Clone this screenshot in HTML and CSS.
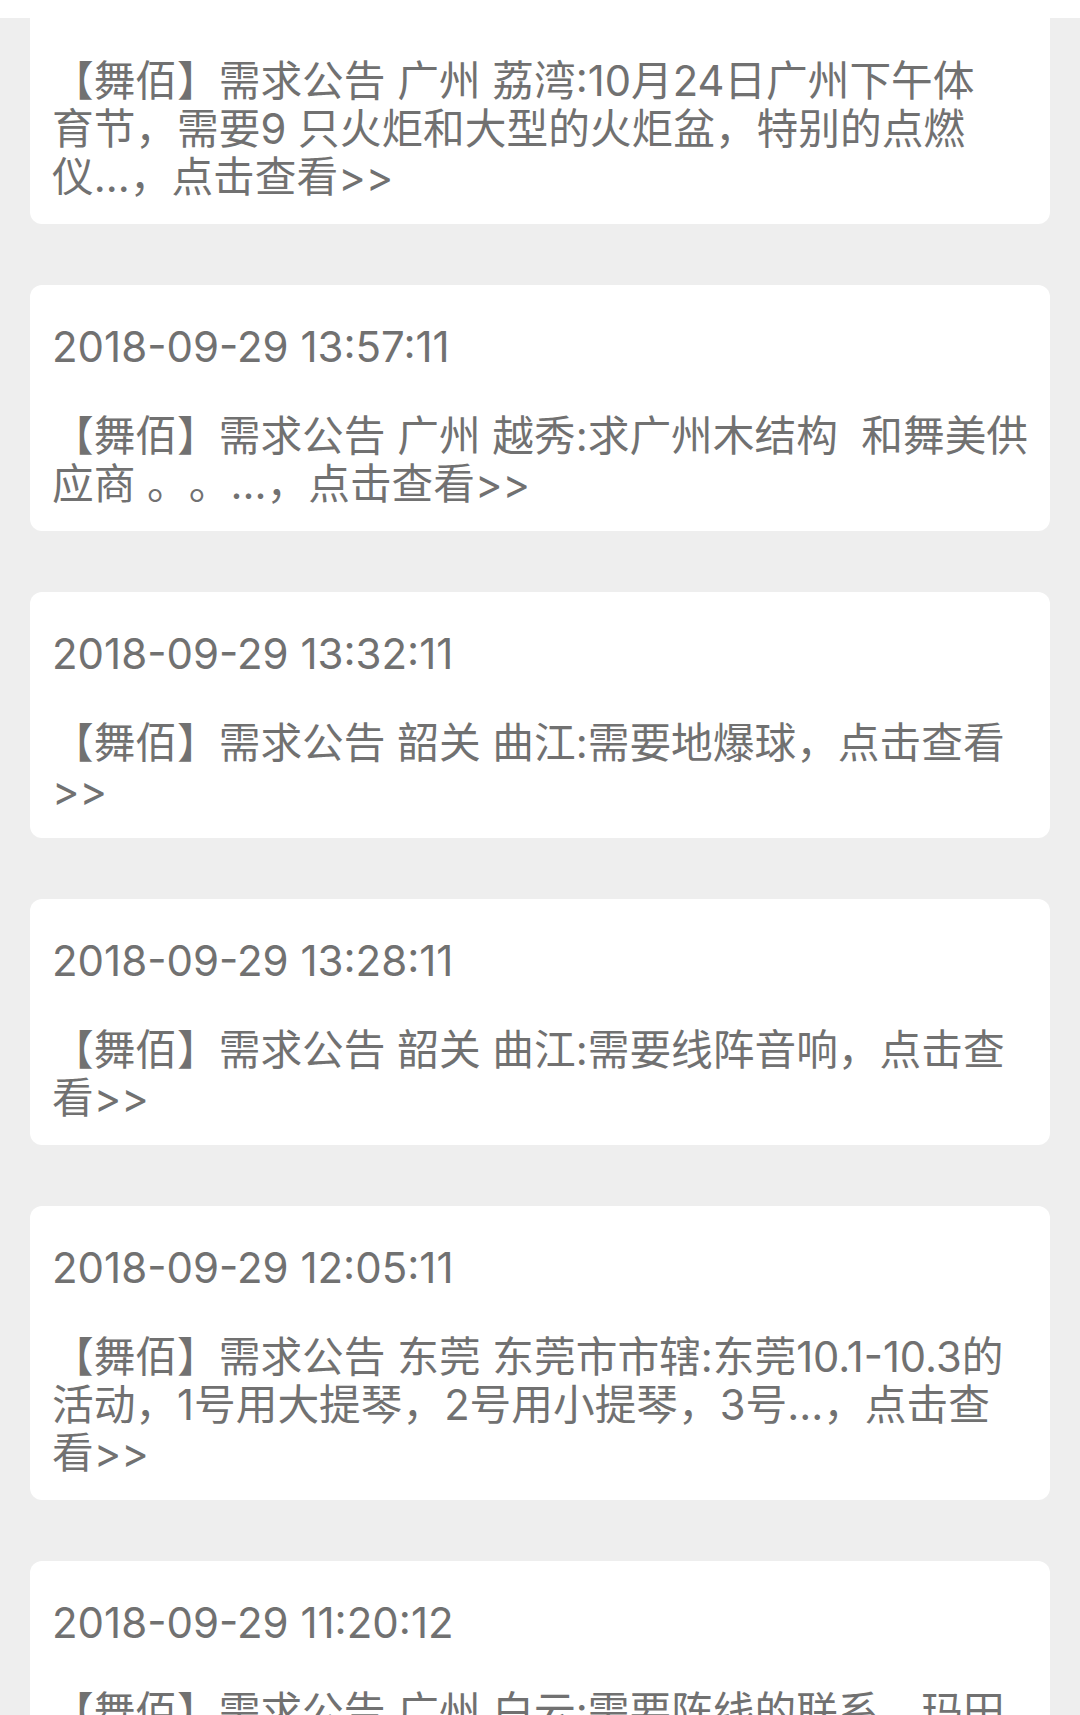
FILE: index.html
```html
<!DOCTYPE html>
<html lang="zh-CN">
<head>
<meta charset="utf-8">
<title>需求公告</title>
<link rel="stylesheet" href="styles.css">
</head>
<body>
<div class="topbar"></div>
<main class="list">
  <article class="card card--cut">
    <p class="desc">【舞佰】需求公告 广州 荔湾:10月24日广州下午体<br>育节，需要9 只火炬和大型的火炬盆，特别的点燃<br>仪...，点击查看&gt;&gt;</p>
  </article>
  <article class="card">
    <p class="time">2018-09-29 13:57:11</p>
    <p class="desc">【舞佰】需求公告 广州 越秀:求广州木结构&nbsp;&nbsp;和舞美供<br>应商 。。...，点击查看&gt;&gt;</p>
  </article>
  <article class="card">
    <p class="time">2018-09-29 13:32:11</p>
    <p class="desc">【舞佰】需求公告 韶关 曲江:需要地爆球，点击查看<br>&gt;&gt;</p>
  </article>
  <article class="card">
    <p class="time">2018-09-29 13:28:11</p>
    <p class="desc">【舞佰】需求公告 韶关 曲江:需要线阵音响，点击查<br>看&gt;&gt;</p>
  </article>
  <article class="card">
    <p class="time">2018-09-29 12:05:11</p>
    <p class="desc">【舞佰】需求公告 东莞 东莞市市辖:东莞10.1-10.3的<br>活动，1号用大提琴，2号用小提琴，3号...，点击查<br>看&gt;&gt;</p>
  </article>
  <article class="card">
    <p class="time">2018-09-29 11:20:12</p>
    <p class="desc">【舞佰】需求公告 广州 白云:需要阵线的联系，玛田</p>
  </article>
</main>
</body>
</html>
```
FILE: styles.css
```css
html, body {
  margin: 0;
  padding: 0;
}

body {
  background: #eeeeee;
  color: #717171;
  font-family: "Inter", "Noto Sans CJK SC", sans-serif;
}

.topbar {
  height: 18px;
  background: #ffffff;
}

.list {
  display: flex;
  flex-direction: column;
  gap: 61px;
  padding: 0 30px 60px;
}

.card {
  background: #ffffff;
  border-radius: 12px;
  padding: 38px 21px 23px 22px;
}

.card--cut {
  border-radius: 0 0 12px 12px;
  padding-top: 39px;
}

.time {
  margin: 0 0 41px;
  font-size: 42px;
  line-height: 48px;
}

.desc {
  margin: 0;
  font-size: 41.7px;
  line-height: 48px;
  white-space: nowrap;
  text-spacing-trim: space-all;
}
```
